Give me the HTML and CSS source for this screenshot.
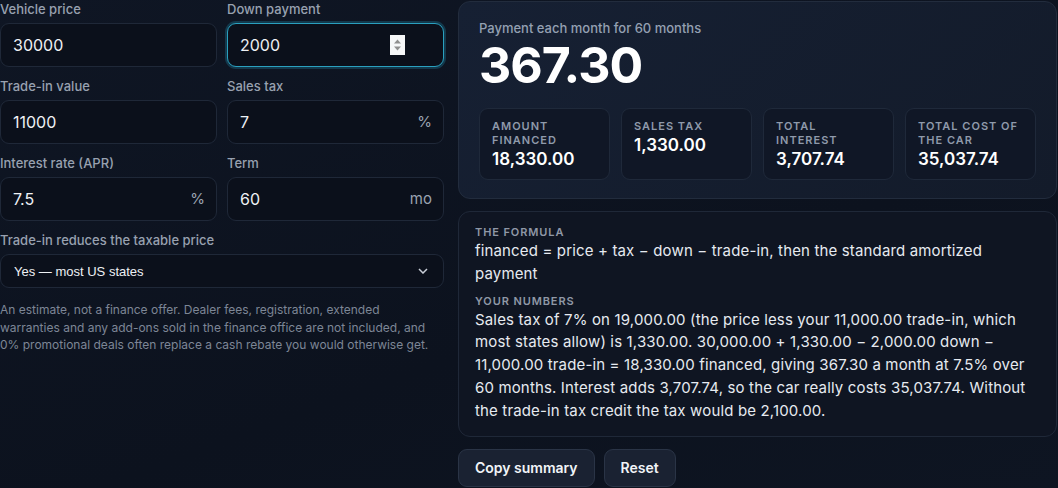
FILE: index.html
```html
<!DOCTYPE html>
<html lang="en">
<head>
    <meta charset="UTF-8" />
    <title>Car loan calculator</title>
    <link rel="stylesheet" href="styles.css">
</head>
<body>
    <div class="calc">
        <div class="form">
            <div class="grid">
                <label class="field">
                    <span class="field-label">Vehicle price</span>
                    <span class="control">
                        <input type="number" value="30000">
                    </span>
                </label>
                <label class="field">
                    <span class="field-label">Down payment</span>
                    <span class="control">
                        <input type="number" value="2000" class="is-focus">
                        <span class="spin">
                            <svg width="15" height="20" viewBox="0 0 15 20">
                                <rect width="15" height="20" fill="#f6f7f8"/>
                                <path d="M4 8.5h7L7.5 4.5z" fill="#8f8f8f"/>
                                <path d="M4 11.5h7L7.5 15.5z" fill="#8f8f8f"/>
                            </svg>
                        </span>
                    </span>
                </label>
                <label class="field">
                    <span class="field-label">Trade-in value</span>
                    <span class="control">
                        <input type="number" value="11000">
                    </span>
                </label>
                <label class="field">
                    <span class="field-label">Sales tax</span>
                    <span class="control">
                        <input type="number" value="7">
                        <span class="unit">%</span>
                    </span>
                </label>
                <label class="field">
                    <span class="field-label">Interest rate (APR)</span>
                    <span class="control">
                        <input type="number" value="7.5">
                        <span class="unit">%</span>
                    </span>
                </label>
                <label class="field">
                    <span class="field-label">Term</span>
                    <span class="control">
                        <input type="number" value="60">
                        <span class="unit">mo</span>
                    </span>
                </label>
                <label class="field wide">
                    <span class="field-label">Trade-in reduces the taxable price</span>
                    <span class="control">
                        <select>
                            <option>Yes — most US states</option>
                            <option>No</option>
                        </select>
                        <svg class="chev" width="10" height="6" viewBox="0 0 10 6">
                            <path d="M1 1l4 4 4-4" fill="none" stroke="#c9ced8" stroke-width="1.5"/>
                        </svg>
                    </span>
                </label>
            </div>
            <p class="note">An estimate, not a finance offer. Dealer fees, registration, extended warranties and any add-ons sold in the finance office are not included, and 0% promotional deals often replace a cash rebate you would otherwise get.</p>
        </div>

        <div class="side">
            <div class="result">
                <div class="result-label">Payment each month for 60 months</div>
                <div class="result-big">367.30</div>
                <div class="stats">
                    <div class="stat">
                        <div class="stat-label">Amount financed</div>
                        <div class="stat-value">18,330.00</div>
                    </div>
                    <div class="stat">
                        <div class="stat-label">Sales tax</div>
                        <div class="stat-value">1,330.00</div>
                    </div>
                    <div class="stat">
                        <div class="stat-label">Total interest</div>
                        <div class="stat-value">3,707.74</div>
                    </div>
                    <div class="stat">
                        <div class="stat-label">Total cost of the car</div>
                        <div class="stat-value">35,037.74</div>
                    </div>
                </div>
            </div>

            <div class="explain">
                <h4>The formula</h4>
                <p>financed = price + tax − down − trade-in, then the standard amortized payment</p>
                <h4>Your numbers</h4>
                <p>Sales tax of 7% on 19,000.00 (the price less your 11,000.00 trade-in, which most states allow) is 1,330.00. 30,000.00 + 1,330.00 − 2,000.00 down − 11,000.00 trade-in = 18,330.00 financed, giving 367.30 a month at 7.5% over 60 months. Interest adds 3,707.74, so the car really costs 35,037.74. Without the trade-in tax credit the tax would be 2,100.00.</p>
            </div>

            <div class="actions">
                <button class="btn">Copy summary</button>
                <button class="btn">Reset</button>
            </div>
        </div>
    </div>
</body>
</html>
```

FILE: styles.css
```css
*{ margin:0; padding:0; box-sizing:border-box;}
body{
    font-family: Inter, "Noto Sans", sans-serif;
    background: linear-gradient(160deg, #0f1624 0%, #0c121e 60%, #0e1522 100%);
    color: #e5e9f0;
    height: 488px;
    overflow: hidden;
}
.calc{
    display: grid;
    grid-template-columns: 444px 1fr;
    gap: 14px;
    padding-right: 1px;
}

/* left column */
.form{
    padding-top: 1px;
}
.grid{
    display: grid;
    grid-template-columns: 1fr 1fr;
    column-gap: 10px;
    row-gap: 11px;
}
.field{
    display: flex;
    flex-direction: column;
    gap: 5px;
}
.field.wide{
    grid-column: 1 / 3;
}
.field-label{
    font-size: 13px;
    line-height: 17px;
    font-weight: 500;
    color: #98a1b0;
}
.control{
    position: relative;
    display: block;
}
.control input{
    display: block;
    width: 100%;
    height: 44px;
    padding: 0 36px 0 12px;
    background: #0b101b;
    border: 1px solid #1f2838;
    border-radius: 9px;
    color: #eef1f5;
    font-family: Inter, sans-serif;
    font-size: 16px;
    outline: none;
    -moz-appearance: textfield;
}
.control input::-webkit-inner-spin-button,
.control input::-webkit-outer-spin-button{
    -webkit-appearance: none;
    margin: 0;
}
.control input.is-focus{
    border-color: #2aa0bf;
    box-shadow: 0 0 0 2px rgba(34,150,185,.28);
}
.spin{
    position: absolute;
    left: 163px;
    top: 12px;
    line-height: 0;
}
.unit{
    position: absolute;
    right: 12px;
    top: 0;
    line-height: 44px;
    font-size: 15px;
    color: #9aa3b1;
}
.control select{
    display: block;
    width: 100%;
    height: 34px;
    padding: 0 30px 0 13px;
    background: #0b101b;
    border: 1px solid #1f2838;
    border-radius: 9px;
    color: #eef1f5;
    font-family: "Liberation Sans", Arial, sans-serif;
    font-size: 13px;
    outline: none;
    appearance: none;
    -webkit-appearance: none;
}
.chev{
    position: absolute;
    right: 16px;
    top: 14px;
}
.note{
    max-width: 432px;
    margin-top: 13px;
    font-size: 12px;
    line-height: 17.5px;
    color: #7d8696;
}

/* right column */
.side{
    display: flex;
    flex-direction: column;
    gap: 12px;
    padding-top: 1px;
}
.result{
    background: linear-gradient(135deg, #162033 0%, #131b2a 100%);
    border: 1px solid #222c3d;
    border-radius: 12px;
    padding: 18px 20px 18px;
}
.result-label{
    font-size: 13px;
    line-height: 17px;
    font-weight: 500;
    color: #94a0b2;
}
.result-big{
    margin-top: 3px;
    font-size: 50px;
    line-height: 50px;
    font-weight: 700;
    letter-spacing: -0.02em;
    color: #fff;
}
.stats{
    margin-top: 18px;
    display: grid;
    grid-template-columns: repeat(4, 1fr);
    gap: 11px;
}
.stat{
    background: #101726;
    border: 1px solid #1f293a;
    border-radius: 9px;
    padding: 10px 12px 9px;
}
.stat-label{
    font-size: 11px;
    line-height: 14px;
    font-weight: 600;
    letter-spacing: 1px;
    text-transform: uppercase;
    color: #8f9aab;
}
.stat-value{
    margin-top: 1px;
    font-size: 17px;
    line-height: 22px;
    font-weight: 600;
    color: #fff;
}
.explain{
    background: #0f1522;
    border: 1px solid #1f2838;
    border-radius: 12px;
    padding: 13px 28px 13px 16px;
}
.explain h4{
    font-size: 11px;
    line-height: 15px;
    font-weight: 600;
    letter-spacing: 0.9px;
    text-transform: uppercase;
    color: #8f98a7;
}
.explain p{
    font-size: 15px;
    line-height: 22.8px;
    letter-spacing: 0.15px;
    color: #e6eaf0;
    margin-bottom: 8px;
}
.explain p:last-child{
    margin-bottom: 0;
}
.actions{
    display: flex;
    gap: 9px;
}
.btn{
    height: 38px;
    padding: 0 16px;
    background: #1a2232;
    border: 1px solid #2a3446;
    border-radius: 9px;
    color: #f1f4f8;
    font-family: Inter, sans-serif;
    font-size: 14px;
    font-weight: 600;
}
```
